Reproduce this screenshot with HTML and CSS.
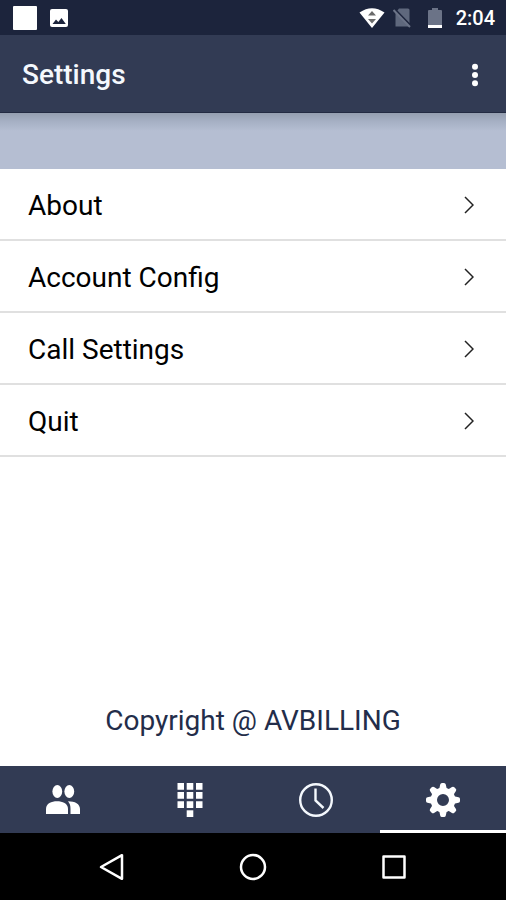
FILE: index.html
```html
<!DOCTYPE html>
<html lang="en">
<head>
    <meta charset="utf-8">
    <meta name="viewport" content="width=device-width, initial-scale=1">
    <title>Settings</title>
    <link rel="stylesheet" href="styles.css">
</head>
<body>
<div class="screen">
    <div class="status-bar">
        <div class="app-square"></div>
        <svg width="18" height="18" viewBox="0 0 18 18">
            <rect width="18" height="18" rx="2" fill="#fff"/>
            <path d="M2.500 15L6 10.500L8.300 13L11.500 9L15.800 15Z" fill="#1c243c"/>
        </svg>
        <div class="status-right">
            <svg class="wifi" width="26" height="20" viewBox="0 0 26 20">
                <path d="M0.500 4.500Q13 -4 25.500 4.500L13 20Z" fill="#fff"/>
                <path d="M9 7.500L13 3L17 7.500ZM9 11L13 15.500L17 11Z" fill="#6b6b6b"/>
            </svg>
            <svg class="sim" width="18" height="20" viewBox="0 0 18 20">
                <path d="M6 0.500H15Q16.500 0.500 16.500 2V18.500H2.500V5Z" fill="#5f687d"/>
                <path d="M1.500 1L18 18" stroke="#1c243c" stroke-width="2"/>
                <path d="M0.500 2L17 19" stroke="#6b7387" stroke-width="2"/>
            </svg>
            <svg class="battery" width="14" height="20" viewBox="0 0 14 20">
                <path d="M4 0H10V2H13Q14 2 14 3V17H0V3Q0 2 1 2H4Z" fill="#6b7387"/>
                <path d="M0 17H14V20H0Z" fill="#fff"/>
            </svg>
            <span class="time">2:04</span>
        </div>
    </div>

    <header class="app-bar">
        <h1>Settings</h1>
        <button type="button" class="more" aria-label="More options">
            <svg width="6" height="24" viewBox="0 0 6 24" fill="#fff">
                <circle cx="3" cy="3.700" r="3"/>
                <circle cx="3" cy="12" r="3"/>
                <circle cx="3" cy="20.300" r="3"/>
            </svg>
        </button>
    </header>

    <div class="banner"></div>

    <main>
        <nav class="menu" aria-label="Settings">
            <a href="#about">About
                <svg width="10" height="18" viewBox="0 0 10 18"><path d="M1 1L9 9L1 17"/></svg>
            </a>
            <a href="#account">Account Config
                <svg width="10" height="18" viewBox="0 0 10 18"><path d="M1 1L9 9L1 17"/></svg>
            </a>
            <a href="#call">Call Settings
                <svg width="10" height="18" viewBox="0 0 10 18"><path d="M1 1L9 9L1 17"/></svg>
            </a>
            <a href="#quit">Quit
                <svg width="10" height="18" viewBox="0 0 10 18"><path d="M1 1L9 9L1 17"/></svg>
            </a>
        </nav>
        <p class="copyright">Copyright @ AVBILLING</p>
    </main>

    <nav class="tabs" aria-label="Sections">
        <button type="button" aria-label="Contacts">
            <svg width="34" height="34" viewBox="0 0 34 34" fill="#fff">
                <ellipse cx="11.300" cy="8.500" rx="4.900" ry="6.400"/>
                <ellipse cx="23.300" cy="8.500" rx="4.900" ry="6.400"/>
                <path d="M0 31V26C0 20.500 5.500 18.300 11 18.300S22 20.500 22 26V31Z"/>
                <path d="M22 18.300C29 18.300 34 21 34 26V31H24.500V26C24.500 22.500 23.800 20.500 22 18.300Z"/>
            </svg>
        </button>
        <button type="button" aria-label="Dial pad">
            <svg width="26" height="34" viewBox="0 0 26 34" fill="#fff">
                <path d="M0.500 0H7V6.700H0.500ZM9.700 0H16.300V6.700H9.700ZM19 0H25.500V6.700H19Z"/>
                <path d="M0.500 9H7V15.700H0.500ZM9.700 9H16.300V15.700H9.700ZM19 9H25.500V15.700H19Z"/>
                <path d="M0.500 18.200H7V24.900H0.500ZM9.700 18.200H16.300V24.900H9.700ZM19 18.200H25.500V24.900H19Z"/>
                <path d="M9.700 27.300H16.300V34H9.700Z"/>
            </svg>
        </button>
        <button type="button" aria-label="History">
            <svg width="34" height="34" viewBox="0 0 34 34" fill="none" stroke="#f4f8fd" stroke-width="2.400">
                <circle cx="17" cy="17" r="15.800"/>
                <path d="M16.500 5.500V17.500L24.500 25"/>
            </svg>
        </button>
        <button type="button" class="active" aria-label="Settings">
            <svg width="34" height="34" viewBox="0 0 34 34" fill="#fff">
                <defs>
                    <path id="tooth" d="M13 7L14.200 1.500Q14.500 0 16 0H18Q19.500 0 19.800 1.500L21 7Z"/>
                </defs>
                <circle cx="17" cy="17" r="9.200" fill="none" stroke="#fff" stroke-width="6.400"/>
                <use href="#tooth"/>
                <use href="#tooth" transform="rotate(45 17 17)"/>
                <use href="#tooth" transform="rotate(90 17 17)"/>
                <use href="#tooth" transform="rotate(135 17 17)"/>
                <use href="#tooth" transform="rotate(180 17 17)"/>
                <use href="#tooth" transform="rotate(225 17 17)"/>
                <use href="#tooth" transform="rotate(270 17 17)"/>
                <use href="#tooth" transform="rotate(315 17 17)"/>
            </svg>
        </button>
    </nav>

    <div class="system-nav">
        <button type="button" aria-label="Back">
            <svg width="28" height="28" viewBox="0 0 28 28"><path d="M3 14L24 2.200V25.800Z"/></svg>
        </button>
        <button type="button" aria-label="Home">
            <svg width="28" height="28" viewBox="0 0 28 28"><circle cx="14" cy="14" r="12"/></svg>
        </button>
        <button type="button" aria-label="Recent apps">
            <svg width="28" height="28" viewBox="0 0 28 28"><rect x="3.500" y="3.500" width="21" height="21"/></svg>
        </button>
    </div>
</div>
</body>
</html>
```

FILE: styles.css
```css
* {
    box-sizing: border-box;
}

body {
    margin: 0;
    font-family: Roboto, "Liberation Sans", sans-serif;
    background-color: #fff;
}

svg {
    display: block;
    flex-shrink: 0;
}

button {
    padding: 0;
    border: none;
    background: none;
    cursor: pointer;
}

.screen {
    min-height: 100vh;
    display: flex;
    flex-direction: column;
}

.status-bar {
    height: 35px;
    display: flex;
    align-items: center;
    gap: 13px;
    padding: 1px 11px 0 13px;
    background-color: #1c243c;
}

.app-square {
    width: 24px;
    height: 24px;
    border-radius: 1px;
    background-color: #fff;
}

.status-right {
    display: flex;
    align-items: center;
    margin-left: auto;
}

.sim {
    margin-left: 8px;
}

.battery {
    margin-left: 17px;
}

.time {
    margin-left: 14px;
    font-size: 20px;
    font-weight: 500;
    color: #fff;
}

.app-bar {
    height: 78px;
    display: flex;
    align-items: center;
    justify-content: space-between;
    padding: 2px 16px 0 22px;
    background-color: #323b54;
    border-bottom: 1px solid #232b42;
}

.app-bar h1 {
    margin: 0;
    font-size: 28px;
    font-weight: 500;
    color: #f4f8fd;
}

.more {
    padding: 12px;
}

.banner {
    height: 56px;
    background: linear-gradient(#959fb0, #a5afc3 8px, #b5bed2 18px, #b5bed2);
}

main {
    flex: 1;
    display: flex;
    flex-direction: column;
    justify-content: space-between;
}

.menu a {
    height: 72px;
    display: flex;
    align-items: center;
    justify-content: space-between;
    padding: 2px 32px 0 28px;
    border-bottom: 2px solid #e0e0e0;
    font-size: 28px;
    color: #000;
    text-decoration: none;
}

.menu path {
    fill: none;
    stroke: #222;
    stroke-width: 1.5;
}

.copyright {
    margin: 0;
    padding: 28px 0 27px;
    font-size: 28px;
    line-height: 36px;
    text-align: center;
    color: #232d4a;
}

.tabs {
    height: 67px;
    display: grid;
    grid-template-columns: repeat(4, 1fr);
    background-color: #323b54;
}

.tabs button {
    display: flex;
    align-items: center;
    justify-content: center;
}

.tabs .active {
    box-shadow: inset 0 -3px #fff;
}

.system-nav {
    height: 67px;
    display: grid;
    grid-template-columns: repeat(3, 1fr);
    padding: 0 42px;
    background-color: #000;
}

.system-nav button {
    display: flex;
    align-items: center;
    justify-content: center;
}

.system-nav svg {
    fill: none;
    stroke: #fff;
    stroke-width: 2.5;
    stroke-linejoin: round;
}
```
